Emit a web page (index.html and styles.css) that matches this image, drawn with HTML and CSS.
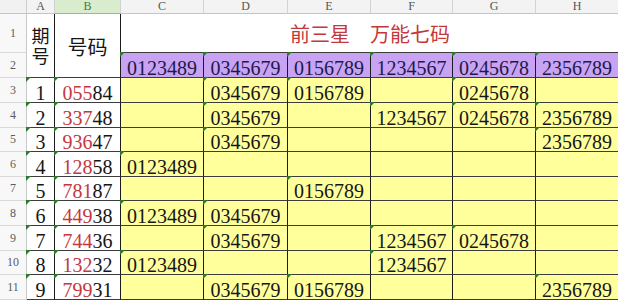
FILE: index.html
```html
<!DOCTYPE html>
<html lang="zh-CN">
<head>
<meta charset="utf-8">
<title>前三星 万能七码</title>
<link rel="stylesheet" href="styles.css">
</head>
<body>
<div class="sheet">
  <div class="corner"></div>
  <div class="ch">A</div>
  <div class="ch sel">B</div>
  <div class="ch">C</div>
  <div class="ch">D</div>
  <div class="ch">E</div>
  <div class="ch">F</div>
  <div class="ch">G</div>
  <div class="ch">H</div>

  <div class="rh">1</div>
  <div class="cell qh"><span class="vt">期号</span></div>
  <div class="cell hm">号码</div>
  <div class="cell title">前三星　万能七码</div>

  <div class="rh">2</div>
  <div class="cell p t">0123489</div>
  <div class="cell p t">0345679</div>
  <div class="cell p t">0156789</div>
  <div class="cell p t">1234567</div>
  <div class="cell p t">0245678</div>
  <div class="cell p t">2356789</div>

  <div class="rh">3</div>
  <div class="cell t">1</div>
  <div class="cell t"><span class="r">055</span>84</div>
  <div class="cell y"></div>
  <div class="cell y t">0345679</div>
  <div class="cell y t">0156789</div>
  <div class="cell y"></div>
  <div class="cell y t">0245678</div>
  <div class="cell y"></div>

  <div class="rh">4</div>
  <div class="cell t">2</div>
  <div class="cell t"><span class="r">337</span>48</div>
  <div class="cell y"></div>
  <div class="cell y t">0345679</div>
  <div class="cell y"></div>
  <div class="cell y t">1234567</div>
  <div class="cell y t">0245678</div>
  <div class="cell y t">2356789</div>

  <div class="rh">5</div>
  <div class="cell t">3</div>
  <div class="cell t"><span class="r">936</span>47</div>
  <div class="cell y"></div>
  <div class="cell y t">0345679</div>
  <div class="cell y"></div>
  <div class="cell y"></div>
  <div class="cell y"></div>
  <div class="cell y t">2356789</div>

  <div class="rh">6</div>
  <div class="cell t">4</div>
  <div class="cell t"><span class="r">128</span>58</div>
  <div class="cell y t">0123489</div>
  <div class="cell y"></div>
  <div class="cell y"></div>
  <div class="cell y"></div>
  <div class="cell y"></div>
  <div class="cell y"></div>

  <div class="rh">7</div>
  <div class="cell t">5</div>
  <div class="cell t"><span class="r">781</span>87</div>
  <div class="cell y"></div>
  <div class="cell y"></div>
  <div class="cell y t">0156789</div>
  <div class="cell y"></div>
  <div class="cell y"></div>
  <div class="cell y"></div>

  <div class="rh">8</div>
  <div class="cell t">6</div>
  <div class="cell t"><span class="r">449</span>38</div>
  <div class="cell y t">0123489</div>
  <div class="cell y t">0345679</div>
  <div class="cell y"></div>
  <div class="cell y"></div>
  <div class="cell y"></div>
  <div class="cell y"></div>

  <div class="rh">9</div>
  <div class="cell t">7</div>
  <div class="cell t"><span class="r">744</span>36</div>
  <div class="cell y"></div>
  <div class="cell y t">0345679</div>
  <div class="cell y"></div>
  <div class="cell y t">1234567</div>
  <div class="cell y t">0245678</div>
  <div class="cell y"></div>

  <div class="rh">10</div>
  <div class="cell t">8</div>
  <div class="cell t"><span class="r">132</span>32</div>
  <div class="cell y t">0123489</div>
  <div class="cell y"></div>
  <div class="cell y"></div>
  <div class="cell y t">1234567</div>
  <div class="cell y"></div>
  <div class="cell y"></div>

  <div class="rh">11</div>
  <div class="cell t">9</div>
  <div class="cell t"><span class="r">799</span>31</div>
  <div class="cell y"></div>
  <div class="cell y t">0345679</div>
  <div class="cell y t">0156789</div>
  <div class="cell y"></div>
  <div class="cell y"></div>
  <div class="cell y t">2356789</div>
</div>
</body>
</html>
```
FILE: styles.css
```css
html, body {
  margin: 0;
  padding: 0;
  background: #ffffff;
  overflow: hidden;
}

.sheet {
  display: grid;
  grid-template-columns: 27px 28px 66px 83px 84px 83px 82px 83px 83px;
  grid-template-rows: 14px 39px 25px 25px 25px 24px 25px 24px 25px 25px 24px 25px;
  width: 644px;
  font-family: "Liberation Serif", "Noto Sans CJK SC", serif;
}

.sheet > div {
  box-sizing: border-box;
}

.corner {
  background: #f1f1f1;
  border-right: 1px solid #cdcdcd;
  border-bottom: 1px solid #c4c4c4;
}

.ch {
  background: #f3f3f3;
  border-right: 1px solid #d2d2d2;
  border-bottom: 1px solid #c4c4c4;
  color: #555;
  font-size: 12px;
  line-height: 13px;
  text-align: center;
}

.ch.sel {
  background: #d9ecce;
  color: #3f7f3a;
  border-bottom-color: #8fc07e;
}

.rh {
  background: #f8f8f8;
  border-right: 1px solid #c8c8c8;
  border-bottom: 1px solid #d8d8d8;
  color: #5c5c5c;
  font-size: 12px;
  display: flex;
  align-items: center;
  justify-content: center;
}

.cell {
  position: relative;
  border-right: 1px solid #1c1c1c;
  border-bottom: 1px solid #3c3c3c;
  background: #ffffff;
  color: #161616;
  font-size: 20px;
  line-height: 18px;
  display: flex;
  align-items: flex-end;
  justify-content: center;
  white-space: nowrap;
}

.qh {
  grid-row: span 2;
  align-items: center;
  padding-top: 2px;
}

.vt {
  writing-mode: vertical-rl;
  text-orientation: upright;
  font-family: "Noto Sans CJK SC", sans-serif;
  font-size: 18px;
  line-height: 20px;
  letter-spacing: 2px;
}

.hm {
  grid-row: span 2;
  font-family: "Noto Sans CJK SC", sans-serif;
  font-size: 20px;
  line-height: 22px;
  align-items: center;
  padding-top: 3px;
}

.title {
  grid-column: span 6;
  font-family: "Noto Sans CJK SC", sans-serif;
  font-size: 20px;
  line-height: 22px;
  color: #c4383b;
  align-items: center;
  padding-top: 1px;
  border-right: none;
}

.p {
  background: #c8a2f3;
  color: #1d1a4a;
}

.y {
  background: #ffff9c;
}

.r {
  color: #c4383b;
}

.t::before {
  content: "";
  position: absolute;
  top: -1px;
  left: -1px;
  width: 0;
  height: 0;
  border-top: 5px solid #2d7a2d;
  border-right: 5px solid transparent;
}
```
